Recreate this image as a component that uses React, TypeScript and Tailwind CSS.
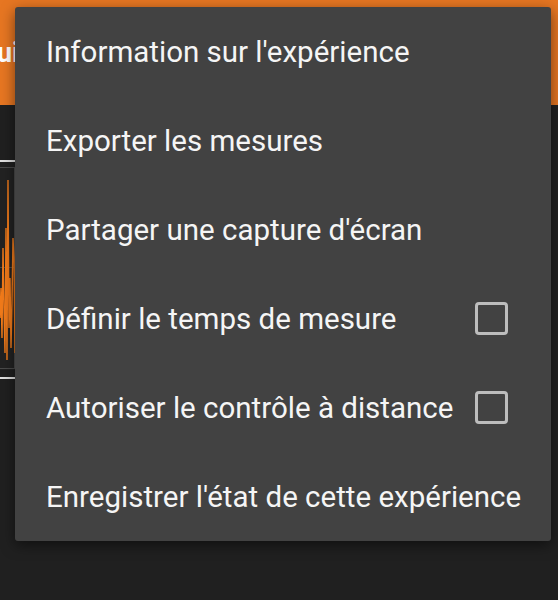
import React from "react";

const items: { label: string; checkbox?: boolean }[] = [
  { label: "Information sur l'expérience" },
  { label: "Exporter les mesures" },
  { label: "Partager une capture d'écran" },
  { label: "Définir le temps de mesure", checkbox: true },
  { label: "Autoriser le contrôle à distance", checkbox: true },
  { label: "Enregistrer l'état de cette expérience" },
];

function Wave() {
  return (
    <svg width="15" height="200" viewBox="0 0 15 200" className="block">
      <line x1="0" y1="99.5" x2="15" y2="99.5" stroke="#4a4a4a" strokeWidth="1" />
      <polyline
        points="0,150 1,120 2,170 3,80 4,140 5,185 6,60 7,192 8,12 9,160 10,110 11,180 12,135 13,70 14,90 15,185"
        fill="none"
        stroke="#f07a1a"
        strokeWidth="1.4"
      />
    </svg>
  );
}

export default function App() {
  return (
    <div
      className="relative w-[558px] h-[600px] overflow-hidden bg-[#202020] flex flex-col"
      style={{ fontFamily: "Roboto, 'Noto Sans', sans-serif" }}
    >
      <header className="h-[105px] shrink-0 bg-[#e67622] flex items-center">
        <span className="ml-[-3px] text-white font-bold text-[27px] leading-none mt-[2px] whitespace-nowrap">
          ui
        </span>
      </header>
      <main className="flex-1 pt-[55px]">
        <div className="w-[15px] flex flex-col">
          <div className="h-[2px] bg-[#e0e0e0]" />
          <div className="mt-[5px] border-t border-b border-r border-[#4a4a4a] bg-[#222]">
            <Wave />
          </div>
          <div className="mt-[8px] h-[2px] bg-[#e0e0e0]" />
        </div>
      </main>

      <div className="absolute left-[15px] top-[7px] w-[536px] bg-[#424242] rounded-[3px] shadow-[0_4px_14px_rgba(0,0,0,0.5)] flex flex-col">
        {items.map((it) => (
          <div key={it.label} className="h-[89px] flex items-center pl-[31px] pr-[43px]">
            <span className="flex-1 text-[#f5f5f5] text-[29.5px] leading-none whitespace-nowrap mt-[3px]">
              {it.label}
            </span>
            {it.checkbox && (
              <span className="w-[33px] h-[33px] rounded-[4px] border-[3px] border-[#bdbdbd] shrink-0" />
            )}
          </div>
        ))}
      </div>
    </div>
  );
}
